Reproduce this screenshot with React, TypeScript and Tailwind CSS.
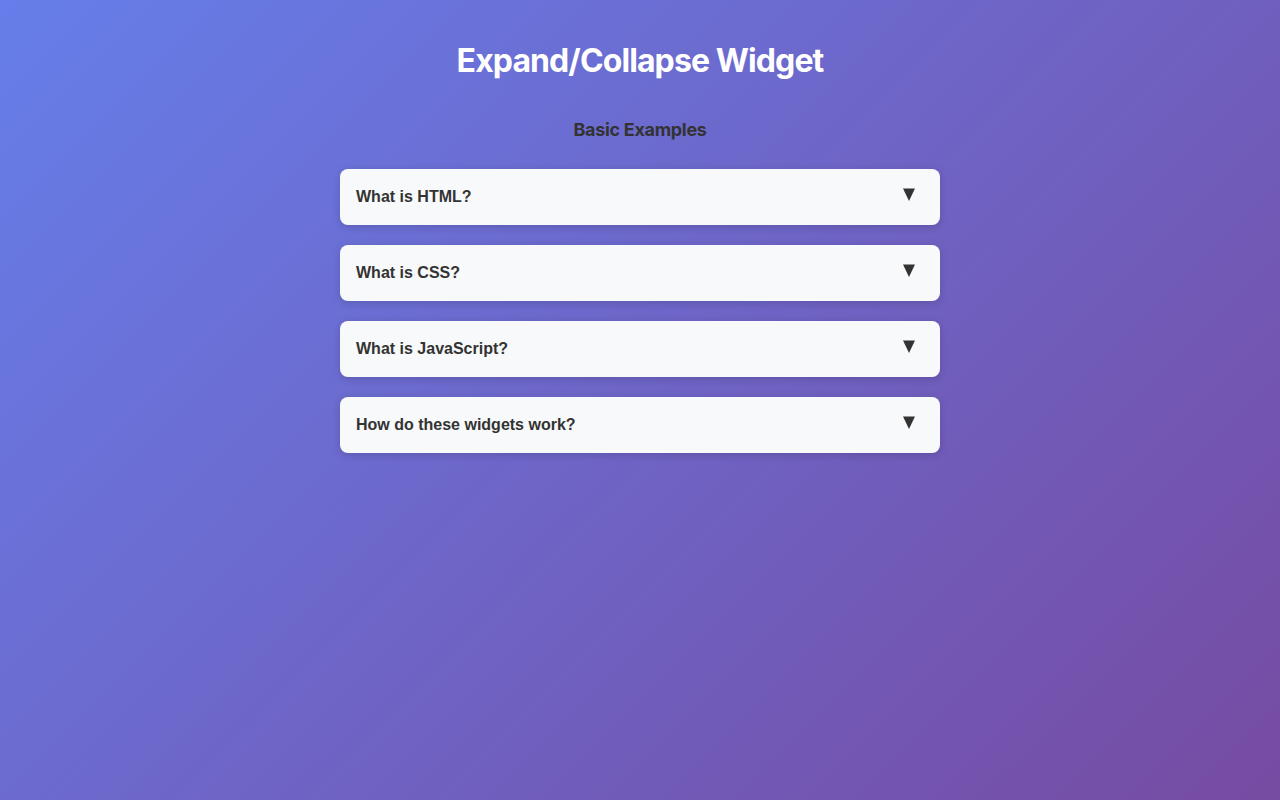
import React from "react";

const items = [
  "What is HTML?",
  "What is CSS?",
  "What is JavaScript?",
  "How do these widgets work?",
];

export default function App() {
  return (
    <div className="min-h-[800px] w-full bg-[linear-gradient(135deg,#667eea_0%,#764ba2_100%)] px-5 pt-[41px]">
      <div className="mx-auto w-[600px]">
        <h1 className="text-center font-['Inter',sans-serif] text-[32px] font-bold leading-[39px] tracking-[-0.9px] text-white">
          Expand/Collapse Widget
        </h1>
        <h2 className="mt-[39px] text-center font-['Inter',sans-serif] text-[18px] font-bold leading-[22px] tracking-[-0.3px] text-[#333]">
          Basic Examples
        </h2>
        <div className="mt-[28px] flex flex-col gap-5">
          {items.map((t) => (
            <div
              key={t}
              className="flex h-14 items-center justify-between rounded-lg bg-[#f8f9fa] pl-4 pr-[25px] shadow-[0_2px_8px_rgba(0,0,0,0.15)]"
            >
              <span className="font-['Liberation_Sans',Arial,sans-serif] text-base font-bold text-[#333]">
                {t}
              </span>
              <svg
                width="12"
                height="13"
                viewBox="0 0 12 13"
                className="mt-[19px] self-start"
                aria-hidden="true"
              >
                <polygon points="0,0.5 12,0.5 6,13" fill="#333" />
              </svg>
            </div>
          ))}
        </div>
      </div>
    </div>
  );
}
